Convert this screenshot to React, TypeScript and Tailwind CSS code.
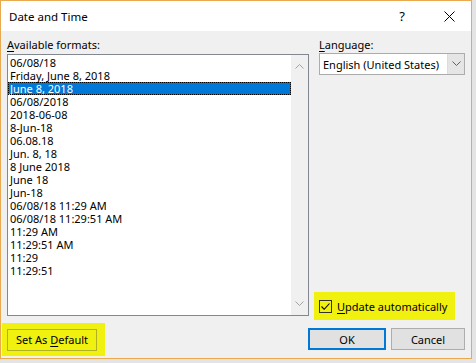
import React from 'react';

const formats = [
	'06/08/18',
	'Friday, June 8, 2018',
	'June 8, 2018',
	'06/08/2018',
	'2018-06-08',
	'8-Jun-18',
	'06.08.18',
	'Jun. 8, 18',
	'8 June 2018',
	'June 18',
	'Jun-18',
	'06/08/18 11:29 AM',
	'06/08/18 11:29:51 AM',
	'11:29 AM',
	'11:29:51 AM',
	'11:29',
	'11:29:51',
];

const Chevron = ({ up = false }: { up?: boolean }) => (
	<svg width="9" height="6" viewBox="0 0 9 6" className={up ? 'rotate-180' : ''}>
		<path d="M0.5 0.5 L4.5 4.5 L8.5 0.5" fill="none" stroke="currentColor" strokeWidth="1" />
	</svg>
);

export default function App() {
	return (
		<div
			className="w-[476px] h-[363px] bg-[#e4e4e4] text-black text-[11px] leading-[15px] whitespace-nowrap"
			style={{ fontFamily: '"Noto Sans", "Liberation Sans", sans-serif' }}
		>
			<div className="w-[472px] h-[359px] border border-[#e9a94f] flex flex-col bg-[#f0f0f0]">
				{/* title bar */}
				<div className="h-[30px] bg-white flex items-center pl-[8px] shrink-0 text-[11.5px]">
					<span className="flex-1">Date and Time</span>
					<span className="w-[10px] text-[13px] mr-[37px] text-center">?</span>
					<svg width="11" height="11" viewBox="0 0 11 11" className="mr-[16px]">
						<path d="M0.5 0.5 L10.5 10.5 M10.5 0.5 L0.5 10.5" stroke="#000" strokeWidth="1" />
					</svg>
				</div>

				{/* body */}
				<div className="flex-1 flex flex-col pl-[6px] pr-[6px] pt-[6px]">
					<div className="flex h-[279px]">
						<div className="w-[302px] flex flex-col">
							<div className="h-[17px]">
								<span className="underline underline-offset-2">A</span>vailable formats:
							</div>
							<div className="h-[263px] border border-[#828790] bg-white flex">
								<div className="flex-1 pt-[1px] leading-[13px]">
									{formats.map((f, i) => (
										<div
											key={f}
											className={
												i === 2
													? 'h-[13px] pl-[2px] bg-[#0078d7] text-white outline outline-1 outline-dotted outline-[#000] -outline-offset-1'
													: 'h-[13px] pl-[2px]'
											}
										>
											{f}
										</div>
									))}
								</div>
								<div className="w-[17px] bg-[#f0f0f0] flex flex-col justify-between items-center py-[8px] text-[#a3a3a3]">
									<Chevron up />
									<Chevron />
								</div>
							</div>
						</div>

						<div className="flex-1 flex flex-col pl-[10px]">
							<div className="h-[16px]">
								<span className="underline underline-offset-2">L</span>anguage:
							</div>
							<div className="h-[22px] border border-[#acacac] bg-white flex items-stretch">
								<div className="flex-1 pl-[3px] flex items-center">English (United States)</div>
								<div className="w-[17px] bg-[#e5e5e5] border-l border-[#dcdcdc] flex items-center justify-center text-[#606060]">
									<Chevron />
								</div>
							</div>
							<div className="flex-1" />
							<div className="h-[28px] w-[141px] -ml-[5px] -mb-[4px] bg-[#f1f10f] flex items-center pl-[5px]">
								<div className="w-[13px] h-[13px] border border-[#333] bg-[#f1f10f] flex items-center justify-center mr-[5px]">
									<svg width="11" height="11" viewBox="0 0 11 11">
										<path d="M1.5 5.5 L4.2 8.3 L9.5 2.5" fill="none" stroke="#000" strokeWidth="1.1" />
									</svg>
								</div>
								<span>
									<span className="underline underline-offset-2">U</span>pdate automatically
								</span>
							</div>
						</div>
					</div>

					{/* bottom row */}
					<div className="flex items-start justify-between mt-[7px]">
						<div className="-ml-[5px] w-[103px] h-[33px] bg-[#f1f10f] flex items-center pl-[5px]">
							<div className="w-[90px] h-[22px] border border-[#b0b026] flex items-center justify-center">
								<span>
									Set As <span className="underline underline-offset-2">D</span>efault
								</span>
							</div>
						</div>
						<div className="flex gap-[5px] mt-[5px]">
							<div className="w-[78px] h-[22px] border-2 border-[#0078d7] bg-[#e1e1e1] flex items-center justify-center">
								OK
							</div>
							<div className="w-[74px] h-[22px] border border-[#adadad] bg-[#e1e1e1] flex items-center justify-center">
								Cancel
							</div>
						</div>
					</div>
				</div>
			</div>
		</div>
	);
}
